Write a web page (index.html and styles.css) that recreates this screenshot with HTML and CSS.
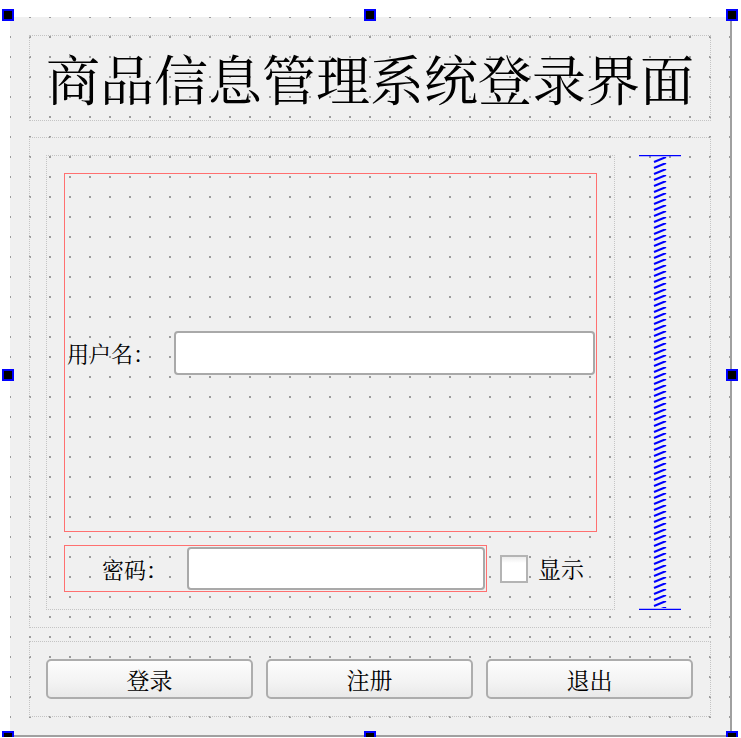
FILE: index.html
```html
<!DOCTYPE html>
<html>
<head>
<meta charset="utf-8">
<title>登录界面</title>
<link rel="stylesheet" href="styles.css">
</head>
<body>
<div class="form">
  <div class="title-box">
    <h1 class="title">商品信息管理系统登录界面</h1>
  </div>
  <div class="middle-box">
    <div class="inner-box">
      <div class="user-frame">
        <span class="user-label">用户名：</span>
        <div class="input user-input"></div>
      </div>
      <div class="pass-row">
        <div class="pass-frame">
          <span class="pass-label">密码：</span>
          <div class="input pass-input"></div>
        </div>
        <span class="checkbox"></span>
        <span class="check-text">显示</span>
      </div>
    </div>
    <svg class="spacer" width="42" height="455" viewBox="0 0 42 455" xmlns="http://www.w3.org/2000/svg">
      <defs>
        <pattern id="spring" x="0" y="2" width="42" height="6" patternUnits="userSpaceOnUse">
          <line x1="15" y1="5" x2="27" y2="0" stroke="#0000ff" stroke-width="2"/>
        </pattern>
      </defs>
      <line x1="0" y1="0.5" x2="42" y2="0.5" stroke="#0000ff" stroke-width="1.5"/>
      <rect x="14" y="2" width="14" height="451" fill="url(#spring)"/>
      <line x1="0" y1="454.5" x2="42" y2="454.5" stroke="#0000ff" stroke-width="1.5"/>
    </svg>
  </div>
  <div class="button-box">
    <button class="btn">登录</button>
    <button class="btn">注册</button>
    <button class="btn">退出</button>
  </div>
  <span class="handle h-tl"></span>
  <span class="handle h-tm"></span>
  <span class="handle h-tr"></span>
  <span class="handle h-ml"></span>
  <span class="handle h-mr"></span>
  <span class="handle h-bl"></span>
  <span class="handle h-bm"></span>
  <span class="handle h-br"></span>
</div>
</body>
</html>
```

FILE: styles.css
```css
html, body {
  margin: 0;
  padding: 0;
  overflow: hidden;
  background: #ffffff;
}

body {
  font-family: "Noto Serif CJK SC", "Noto Sans CJK SC", serif;
  color: #000000;
}

.form {
  position: relative;
  box-sizing: border-box;
  margin: 17px 0 0 10px;
  width: 722px;
  height: 720px;
  padding: 18px 0 0 19px;
  border-right: 2px solid #a0a0a0;
  border-bottom: 2px solid #a0a0a0;
  background-color: #f0f0f0;
  background-image: conic-gradient(from 270deg at 2px 2px, #9c9c9c 25%, transparent 0);
  background-size: 20px 20px;
  background-position: -1px -1px;
}

.title-box {
  box-sizing: border-box;
  width: 682px;
  height: 86px;
  border: 1px dotted #c4c4c4;
  display: flex;
  align-items: center;
  justify-content: center;
}

.title {
  margin: 0;
  font-size: 54px;
  font-weight: normal;
  line-height: 1;
  white-space: nowrap;
}

.middle-box {
  box-sizing: border-box;
  margin-top: 16px;
  width: 682px;
  height: 491px;
  border: 1px dotted #c4c4c4;
  padding: 17px 0 0 16px;
  display: flex;
  align-items: flex-start;
}

.inner-box {
  box-sizing: border-box;
  width: 569px;
  height: 455px;
  border: 1px dotted #c4c4c4;
  padding: 17px;
  display: flex;
  flex-direction: column;
  gap: 13px;
}

.user-frame {
  box-sizing: border-box;
  width: 533px;
  height: 359px;
  border: 1px solid #ff7070;
  display: flex;
  align-items: center;
}

.user-label {
  box-sizing: border-box;
  width: 109px;
  padding-left: 2px;
  font-size: 22px;
  line-height: 1;
  white-space: nowrap;
}

.input {
  box-sizing: border-box;
  background: #ffffff;
  border: 2px solid #a9a9a9;
  border-radius: 4px;
}

.user-input {
  width: 421px;
  height: 44px;
}

.pass-row {
  display: flex;
  align-items: center;
  height: 47px;
}

.pass-frame {
  box-sizing: border-box;
  width: 423px;
  height: 47px;
  border: 1px solid #ff7070;
  display: flex;
  align-items: center;
}

.pass-label {
  box-sizing: border-box;
  width: 122px;
  padding-left: 37px;
  font-size: 22px;
  line-height: 1;
  white-space: nowrap;
}

.pass-input {
  width: 298px;
  height: 43px;
}

.checkbox {
  box-sizing: border-box;
  margin-left: 13px;
  width: 28px;
  height: 28px;
  border: 2px solid #b4b4b4;
  background: linear-gradient(#ececec, #ffffff 25%);
}

.check-text {
  margin-left: 10px;
  font-size: 23px;
  line-height: 1;
}

.spacer {
  display: block;
  margin-left: 24px;
  flex: none;
}

.button-box {
  box-sizing: border-box;
  margin-top: 13px;
  width: 682px;
  height: 76px;
  border: 1px dotted #c4c4c4;
  padding: 17px 0 0 16px;
  display: flex;
  gap: 13px;
}

.btn {
  box-sizing: border-box;
  width: 207px;
  height: 40px;
  padding: 0;
  border: 2px solid #adadad;
  border-radius: 5px;
  background: linear-gradient(#fdfdfd, #f3f3f3 60%, #e9e9e9);
  font-family: inherit;
  font-size: 23px;
  line-height: 1;
  color: #000000;
}

.handle {
  position: absolute;
  box-sizing: border-box;
  width: 12px;
  height: 12px;
  background: #000000;
  border: 2px solid #0000ff;
}

.h-tl { left: -8px; top: -8px; }
.h-tm { left: 354px; top: -8px; }
.h-tr { left: 716px; top: -8px; }
.h-ml { left: -8px; top: 352px; }
.h-mr { left: 716px; top: 352px; }
.h-bl { left: -8px; top: 714px; }
.h-bm { left: 354px; top: 714px; }
.h-br { left: 716px; top: 714px; }
```
